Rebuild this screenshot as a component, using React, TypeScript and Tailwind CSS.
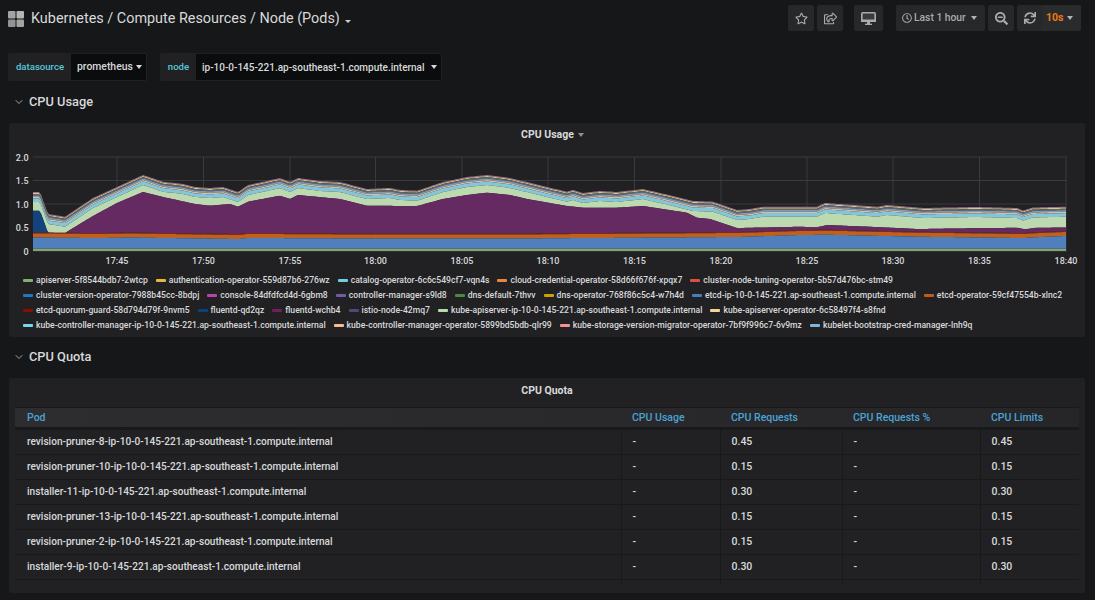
import { ChevronDown } from "lucide-react";
import {
  FaRegClock,
  FaRegShareSquare,
  FaRegStar,
  FaSearchMinus,
  FaSync,
} from "react-icons/fa";

type Knot = [number, number];

const TOP: Knot[] = [
  [33, 192], [40, 192], [48, 214], [65, 216.7], [93, 198], [117, 187], [143, 175],
  [163, 181.7], [183, 184], [195, 187], [210, 188], [223, 187], [238, 192], [248, 185],
  [267, 181], [280, 178], [290, 182], [298, 178], [320, 181], [340, 182], [367, 189],
  [390, 188], [400, 190], [417, 190.7], [443, 182], [467, 177], [487, 175], [510, 178],
  [550, 187.7], [567, 191.7], [573, 190], [583, 193], [600, 191], [617, 192], [643, 189],
  [673, 196], [693, 201], [713, 201.7], [737, 210], [750, 209], [763, 206.7], [817, 206.7],
  [825, 203], [877, 206.7], [887, 205], [923, 208], [977, 207], [1017, 208], [1023, 210.5],
  [1033, 207.5], [1066, 206.7],
];

const PURPLE: Knot[] = [
  [33, 210.7], [40, 210.7], [48, 233], [65, 233], [83, 222], [93, 216], [117, 203],
  [143, 192], [163, 197], [195, 204], [210, 205.7], [230, 204], [238, 206.7], [248, 201.7],
  [280, 195.7], [290, 199], [298, 195], [340, 199], [367, 205.7], [417, 206], [443, 199],
  [467, 195], [487, 192.7], [510, 195], [527, 199], [567, 206], [583, 207.7], [617, 207.7],
  [643, 206], [687, 212.7], [697, 217.7], [710, 219], [737, 228], [800, 226.7], [817, 227.3],
  [827, 225], [883, 227.3], [917, 229], [1017, 227.7], [1025, 229.3], [1037, 227.7], [1066, 227.6],
];

const ORANGE: Knot[] = [
  [33, 233.5], [100, 234], [130, 233.5], [238, 235], [248, 234], [367, 234.5], [520, 234.5],
  [737, 233], [800, 231], [827, 230.7], [917, 232.7], [1023, 234], [1040, 233], [1066, 232],
];

const at = (knots: Knot[], x: number) => {
  for (let i = 1; i < knots.length; i++) {
    if (x <= knots[i][0]) {
      const [x0, y0] = knots[i - 1];
      const [x1, y1] = knots[i];
      return y0 + ((y1 - y0) * (x - x0)) / (x1 - x0);
    }
  }
  return knots[knots.length - 1][1];
};

const xsBetween = (from: number, to: number) => {
  const xs: number[] = [];
  for (let x = from; x < to; x += 2) xs.push(x);
  xs.push(to);
  return xs;
};

const band = (
  upper: (x: number) => number,
  lower: (x: number) => number,
  from = 33,
  to = 1066
) => {
  const xs = xsBetween(from, to);
  const head = xs.map((x) => `${x},${upper(x).toFixed(1)}`);
  const tail = [...xs].reverse().map((x) => `${x},${lower(x).toFixed(1)}`);
  return [...head, ...tail].join(" ");
};

const top = (x: number) => at(TOP, x);
const purple = (x: number) => at(PURPLE, x);
const orange = (x: number) => at(ORANGE, x);

const capLayers: [number, number, string][] = [
  [0, 1, "#9c7296"],
  [1, 2, "#d8c98a"],
  [2, 3.4, "#5f666c"],
  [3.4, 5, "#8297b4"],
  [5, 6.4, "#d3bfa6"],
  [6.4, 10, "#83c6d9"],
];

const hours = [
  [117, "17:45"], [203.5, "17:50"], [290, "17:55"], [375.5, "18:00"], [462, "18:05"],
  [548, "18:10"], [634.5, "18:15"], [721, "18:20"], [807, "18:25"], [893, "18:30"],
  [979.5, "18:35"], [1066, "18:40"],
] as const;

const yTicks = [
  [157, "2.0"], [180.5, "1.5"], [204, "1.0"], [227.5, "0.5"], [251, "0"],
] as const;

const legendRows: [string, string][][] = [
  [
    ["#7eb26d", "apiserver-5f8544bdb7-2wtcp"],
    ["#eab839", "authentication-operator-559d87b6-276wz"],
    ["#6ed0e0", "catalog-operator-6c6c549cf7-vqn4s"],
    ["#ef843c", "cloud-credential-operator-58d66f676f-xpqx7"],
    ["#e24d42", "cluster-node-tuning-operator-5b57d476bc-stm49"],
  ],
  [
    ["#1f78c1", "cluster-version-operator-7988b45cc-8bdpj"],
    ["#ba43a9", "console-84dfdfcd4d-6gbm8"],
    ["#705da0", "controller-manager-s9ld8"],
    ["#508642", "dns-default-7thvv"],
    ["#cca300", "dns-operator-768f86c5c4-w7h4d"],
    ["#447ebc", "etcd-ip-10-0-145-221.ap-southeast-1.compute.internal"],
    ["#c15c17", "etcd-operator-59cf47554b-xlnc2"],
  ],
  [
    ["#890f02", "etcd-quorum-guard-58d794d79f-9nvm5"],
    ["#0a437c", "fluentd-qd2qz"],
    ["#6d1f62", "fluentd-wchb4"],
    ["#584477", "istio-node-42mq7"],
    ["#b7dbab", "kube-apiserver-ip-10-0-145-221.ap-southeast-1.compute.internal"],
    ["#f4d598", "kube-apiserver-operator-6c58497f4-s8fnd"],
  ],
  [
    ["#70dbed", "kube-controller-manager-ip-10-0-145-221.ap-southeast-1.compute.internal"],
    ["#f9ba8f", "kube-controller-manager-operator-5899bd5bdb-qlr99"],
    ["#f29191", "kube-storage-version-migrator-operator-7bf9f996c7-6v9mz"],
    ["#82b5d8", "kubelet-bootstrap-cred-manager-lnh9q"],
  ],
];

const pods: [string, string][] = [
  ["revision-pruner-8-ip-10-0-145-221.ap-southeast-1.compute.internal", "0.45"],
  ["revision-pruner-10-ip-10-0-145-221.ap-southeast-1.compute.internal", "0.15"],
  ["installer-11-ip-10-0-145-221.ap-southeast-1.compute.internal", "0.30"],
  ["revision-pruner-13-ip-10-0-145-221.ap-southeast-1.compute.internal", "0.15"],
  ["revision-pruner-2-ip-10-0-145-221.ap-southeast-1.compute.internal", "0.15"],
  ["installer-9-ip-10-0-145-221.ap-southeast-1.compute.internal", "0.30"],
];

const Caret = ({ color = "border-t-[#b0b2b5]" }: { color?: string }) => (
  <span className={`inline-block h-0 w-0 border-x-[3.5px] border-t-[4px] border-x-transparent ${color}`} />
);

const ToolButton = ({ className, children }: { className: string; children: React.ReactNode }) => (
  <div className={`flex h-[26px] items-center rounded-[2px] bg-[#27282a] text-[#a9abad] ${className}`}>
    {children}
  </div>
);

const Variable = ({
  label,
  value,
  labelW,
  valueW,
}: {
  label: string;
  value: string;
  labelW: string;
  valueW: string;
}) => (
  <div className="flex h-[28px] rounded-[2px] border border-[#202124] font-medium">
    <div className={`flex items-center justify-center bg-[#212124] text-[9.6px] text-[#58c8d8] ${labelW}`}>{label}</div>
    <div className={`flex items-center justify-between whitespace-nowrap bg-[#0b0c0e] pl-[6px] pr-[4px] text-[#d8d9da] ${valueW}`}>
      <span>{value}</span>
      <Caret color="border-t-[#d8d9da]" />
    </div>
  </div>
);

const RowTitle = ({ title, className }: { title: string; className: string }) => (
  <div className={`flex h-[20px] items-center pl-[13px] text-[12.8px] font-medium text-[#d8d9da] ${className}`}>
    <ChevronDown size={12} strokeWidth={2} className="mr-[4px] text-[#a0a2a5]" />
    {title}
  </div>
);

const CpuChart = () => (
  <svg viewBox="9 150 1076 122" className="block h-[122px] w-[1076px]">
    {yTicks.map(([y]) => (
      <line key={y} x1={33} x2={1067} y1={y} y2={y} stroke="#3b3b3e" strokeWidth={1} />
    ))}
    {hours.map(([x]) => (
      <line key={x} x1={x} x2={x} y1={157} y2={251} stroke="#3b3b3e" strokeWidth={1} />
    ))}

    {/* stack, from the top of the chart down */}
    {capLayers.map(([a, b, fill]) => (
      <polygon key={fill} fill={fill} points={band((x) => top(x) + a, (x) => top(x) + b)} />
    ))}
    <polygon fill="#bcd9b0" points={band((x) => top(x) + 10, purple)} />
    <polygon fill="#13437c" points={band(purple, (x) => orange(x) - 1, 33, 48)} />
    <polygon fill="#652a62" points={band(purple, (x) => orange(x) - 1, 48, 1066)} />
    <polygon fill="#7d2a1c" points={band((x) => orange(x) - 1, orange)} />
    <polygon fill="#c15f1f" points={band(orange, (x) => orange(x) + 4)} />
    <polygon fill="#4f80bb" points={band((x) => orange(x) + 4, () => 248)} />
    <polygon fill="#66668c" points={band(() => 248, () => 249)} />
    <polygon fill="#79ab70" points={band(() => 249, () => 251)} />

    <g className="fill-[#d8d9da] text-[9px] font-medium">
      {yTicks.map(([y, label]) => (
        <text key={label} x={28.5} y={y + 3.5} textAnchor="end">
          {label}
        </text>
      ))}
      {hours.map(([x, label]) => (
        <text key={label} x={x} y={264} textAnchor="middle">
          {label}
        </text>
      ))}
    </g>
  </svg>
);

const Legend = () => (
  <div className="h-[59px] overflow-hidden pl-[14px] pt-[1px] text-[8.6px] font-medium leading-[15px] text-[#d8d9da]">
    {legendRows.map((row) => (
      <div key={row[0][1]} className="flex h-[15px] items-center gap-[8px] whitespace-nowrap">
        {row.map(([color, name]) => (
          <div key={name} className="flex items-center gap-[3px]">
            <span className="h-[3px] w-[10px] rounded-[1px]" style={{ backgroundColor: color }} />
            <span>{name}</span>
          </div>
        ))}
      </div>
    ))}
  </div>
);

const QUOTA_GRID = "grid grid-cols-[606px_99px_122px_138px_99px]";

const QuotaTable = () => (
  <div className="mx-[6px] h-[177px] overflow-hidden text-[10.5px] font-medium">
    <div className={`${QUOTA_GRID} h-[20px] items-center border-t border-[#18191b] bg-gradient-to-r from-[#2d2d30] to-[#262629] text-[#4aa3d6]`}>
      {["Pod", "CPU Usage", "CPU Requests", "CPU Requests %", "CPU Limits"].map((h, i) => (
        <div key={h} className={i === 0 ? "pl-[12px]" : "pl-[11px]"}>{h}</div>
      ))}
    </div>
    <div className="h-[3px] bg-[#18191b]" />
    {pods.map(([name, value]) => (
      <div key={name} className={`${QUOTA_GRID} h-[25px] border-b-[1.5px] border-[#18191b] text-[#d8d9da]`}>
        <div className="flex items-center pl-[12px] text-[10.1px]">{name}</div>
        <div className="flex items-center border-l-[1.5px] border-[#18191b] pl-[10.5px]">-</div>
        <div className="flex items-center border-l-[1.5px] border-[#18191b] pl-[10.5px]">{value}</div>
        <div className="flex items-center border-l-[1.5px] border-[#18191b] pl-[10.5px]">-</div>
        <div className="flex items-center border-l-[1.5px] border-[#18191b] pl-[10.5px]">{value}</div>
      </div>
    ))}
    <div className={`${QUOTA_GRID} h-[6px]`}>
      <div />
      <div className="border-l-[1.5px] border-[#18191b]" />
      <div className="border-l-[1.5px] border-[#18191b]" />
      <div className="border-l-[1.5px] border-[#18191b]" />
      <div className="border-l-[1.5px] border-[#18191b]" />
    </div>
  </div>
);

export default function App() {
  return (
    <div className="h-[600px] w-[1095px] overflow-hidden bg-[#161719] [font-family:Roboto,sans-serif]">
      {/* navbar */}
      <div className="flex h-[37px] items-start pt-[5px]">
        <div className="mt-[1px] flex h-[26px] items-center pl-[8px]">
          <svg viewBox="0 0 16 16" className="h-[16px] w-[16px]">
            <rect x="0" y="0" width="7.5" height="7.5" rx="1" fill="#a2a3a4" />
            <rect x="8.5" y="0" width="7.5" height="7.5" rx="1" fill="#b4b5b6" />
            <rect x="0" y="8.5" width="7.5" height="7.5" rx="1" fill="#929394" />
            <rect x="8.5" y="8.5" width="7.5" height="7.5" rx="1" fill="#a2a3a4" />
          </svg>
          <span className="ml-[7px] text-[14.4px] text-[#d8d9da]">Kubernetes / Compute Resources / Node (Pods)</span>
          <span className="ml-[5px] mt-[4px] flex">
            <span className="inline-block h-0 w-0 border-x-[3px] border-t-[3px] border-x-transparent border-t-[#c7d0d9]" />
          </span>
        </div>
        <div className="ml-auto flex pr-[14px]">
          <ToolButton className="w-[26px] justify-center"><FaRegStar size={13} /></ToolButton>
          <ToolButton className="ml-[3px] w-[26px] justify-center"><FaRegShareSquare size={13} /></ToolButton>
          <ToolButton className="ml-[11px] w-[29px] justify-center">
            <svg viewBox="0 0 15 13" className="h-[13px] w-[15px]">
              <rect x="0.8" y="0.8" width="13.4" height="8.4" rx="1" fill="#3a3b3e" stroke="#a9abad" strokeWidth="1.6" />
              <rect x="0" y="7.5" width="15" height="2.5" rx="0.6" fill="#a9abad" />
              <rect x="6" y="10" width="3" height="2" fill="#a9abad" />
              <rect x="4" y="11.7" width="7" height="1.3" fill="#a9abad" />
            </svg>
          </ToolButton>
          <ToolButton className="ml-[13px] w-[89px] gap-[2px] pl-[6px] text-[10.3px] font-medium">
            <FaRegClock size={10} />
            <span>Last 1 hour</span>
            <span className="ml-[3px] flex"><Caret /></span>
          </ToolButton>
          <ToolButton className="ml-[3px] w-[26px] justify-center"><FaSearchMinus size={13} /></ToolButton>
          <ToolButton className="ml-[3px] w-[64px]">
            <span className="flex h-full w-[25px] items-center justify-center"><FaSync size={12} /></span>
            <span className="flex h-full flex-1 items-center gap-[4px] rounded-r-[2px] bg-[#2a2b2d] pl-[4px]">
              <span className="text-[10.5px] font-bold text-[#eb7b18]">10s</span>
              <Caret />
            </span>
          </ToolButton>
        </div>
      </div>

      {/* variables */}
      <div className="mt-[16px] flex gap-[13px] pl-[8px]">
        <div className="text-[10.4px]">
          <Variable label="datasource" value="prometheus" labelW="w-[62px]" valueW="w-[75px]" />
        </div>
        <div className="text-[10px]">
          <Variable label="node" value="ip-10-0-145-221.ap-southeast-1.compute.internal" labelW="w-[35px]" valueW="w-[245px]" />
        </div>
      </div>

      <RowTitle title="CPU Usage" className="mt-[11px]" />

      <div className="ml-[9px] mt-[11px] h-[214px] w-[1076px] rounded-[2px] bg-[#212124]">
        <div className="flex h-[27px] items-center justify-center gap-[4px] pb-[4px] pl-[11px] text-[10.5px] font-bold text-[#d8d9da]">
          CPU Usage
          <Caret color="border-t-[#8e8f91]" />
        </div>
        <CpuChart />
        <Legend />
      </div>

      <RowTitle title="CPU Quota" className="mt-[10px]" />

      <div className="ml-[9px] mt-[11px] h-[215px] w-[1076px] rounded-[2px] bg-[#212124]">
        <div className="flex h-[29px] items-center justify-center pb-[4px] text-[10.5px] font-bold text-[#d8d9da]">CPU Quota</div>
        <QuotaTable />
      </div>
    </div>
  );
}
